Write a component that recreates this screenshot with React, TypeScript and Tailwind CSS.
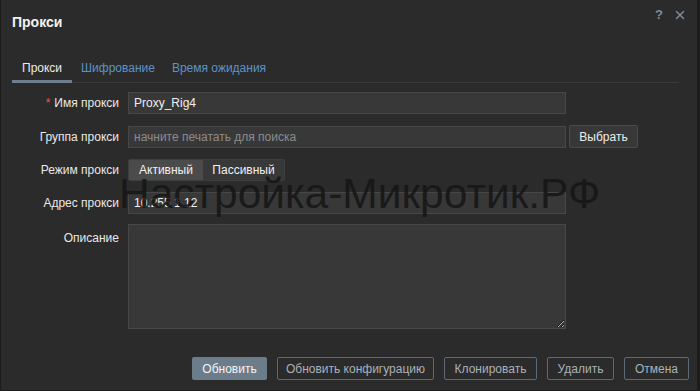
import { X } from "lucide-react";

const font = { fontFamily: '"Liberation Sans", Arial, sans-serif' };

function Row({
  label,
  required,
  children,
  top = false,
}: {
  label: string;
  required?: boolean;
  top?: boolean;
  children: React.ReactNode;
}) {
  return (
    <div className={`flex ${top ? "items-start" : "items-center"}`}>
      <div
        className={`w-[127px] shrink-0 pr-[9px] text-right text-[12px] text-[#e8e8e8] ${
          top ? "pt-[5px]" : ""
        }`}
      >
        {required && <span className="mr-[4px] text-[#e05a5a]">*</span>}
        {label}
      </div>
      {children}
    </div>
  );
}

const inputCls =
  "h-[22px] w-[438px] border border-[#474747] bg-[#383838] px-[5px] text-[12px] text-[#f0f0f0] outline-none placeholder:text-[#8c8c8c]";

export default function App() {
  return (
    <div className="h-[391px] w-full bg-[#1c1c1c] pb-[1px] pl-[1px] pr-[3px]" style={font}>
      <div className="relative flex h-full flex-col bg-[#2b2b2b]">
        {/* Header */}
        <div className="flex h-[44px] items-center justify-between pl-[11px] pr-[10px]">
          <h1 className="text-[14px] font-bold text-[#f2f2f2]">Прокси</h1>
          <div className="-mt-[14px] flex items-center gap-[10px] text-[#7e8c99]">
            <span className="text-[13px] font-bold">?</span>
            <X className="h-[14px] w-[14px]" strokeWidth={2.5} />
          </div>
        </div>

        {/* Tabs */}
        <div className="mx-[11px] mt-[15px] mr-[18px] flex border-b border-[#3a3a3a] text-[12px]">
          <div className="-mb-[1px] border-b-[3px] border-[#6e7e8c] px-[10px] pb-[3px] text-[#ececec]">
            Прокси
          </div>
          <div className="pl-[9px] pr-[8px] pb-[3px] text-[#5b93c7]">Шифрование</div>
          <div className="px-[9px] pb-[3px] text-[#5b93c7]">Время ожидания</div>
        </div>

        {/* Form */}
        <div className="mt-[9px] flex flex-col gap-[11px]">
          <Row label="Имя прокси" required>
            <input className={inputCls} defaultValue="Proxy_Rig4" />
          </Row>
          <Row label="Группа прокси">
            <input className={inputCls} placeholder="начните печатать для поиска" />
            <button className="ml-[3px] h-[23px] w-[69px] rounded-[2px] border border-[#4a4a4a] bg-[#383838] text-[12px] text-[#ececec]">
              Выбрать
            </button>
          </Row>
          <Row label="Режим прокси">
            <div className="flex h-[22px] rounded-[2px] border border-[#3e3e3e] text-[12px] text-[#f0f0f0]">
              <div className="flex w-[74px] items-center justify-center bg-[#4b4b4b]">Активный</div>
              <div className="flex w-[81px] items-center justify-center bg-[#383838]">Пассивный</div>
            </div>
          </Row>
          <Row label="Адрес прокси">
            <input className={inputCls} defaultValue="10.255.1.12" />
          </Row>
          <div className="-mt-[1px]">
            <Row label="Описание" top>
              <textarea className="h-[105px] w-[438px] resize border border-[#474747] bg-[#383838] px-[5px] text-[12px] text-[#f0f0f0] outline-none" />
            </Row>
          </div>
        </div>

        {/* Footer */}
        <div className="mt-auto mb-[10px] flex justify-end gap-[10px] pr-[8px] text-[12px]">
          <button className="h-[23px] w-[75px] rounded-[2px] bg-[#6b7d8b] text-[#f4f4f4]">Обновить</button>
          <button className="h-[23px] w-[157px] rounded-[2px] border border-[#5c6976] text-[#a9b1b9]">
            Обновить конфигурацию
          </button>
          <button className="h-[23px] w-[93px] rounded-[2px] border border-[#5c6976] text-[#a9b1b9]">
            Клонировать
          </button>
          <button className="h-[23px] w-[67px] rounded-[2px] border border-[#5c6976] text-[#a9b1b9]">
            Удалить
          </button>
          <button className="h-[23px] w-[65px] rounded-[2px] border border-[#5c6976] text-[#a9b1b9]">
            Отмена
          </button>
        </div>

        {/* Watermark */}
        <div className="pointer-events-none absolute left-[118px] top-[173px] text-[42.5px] leading-none text-[#161616]/90">
          Настройка-Микротик.РФ
        </div>
      </div>
    </div>
  );
}
